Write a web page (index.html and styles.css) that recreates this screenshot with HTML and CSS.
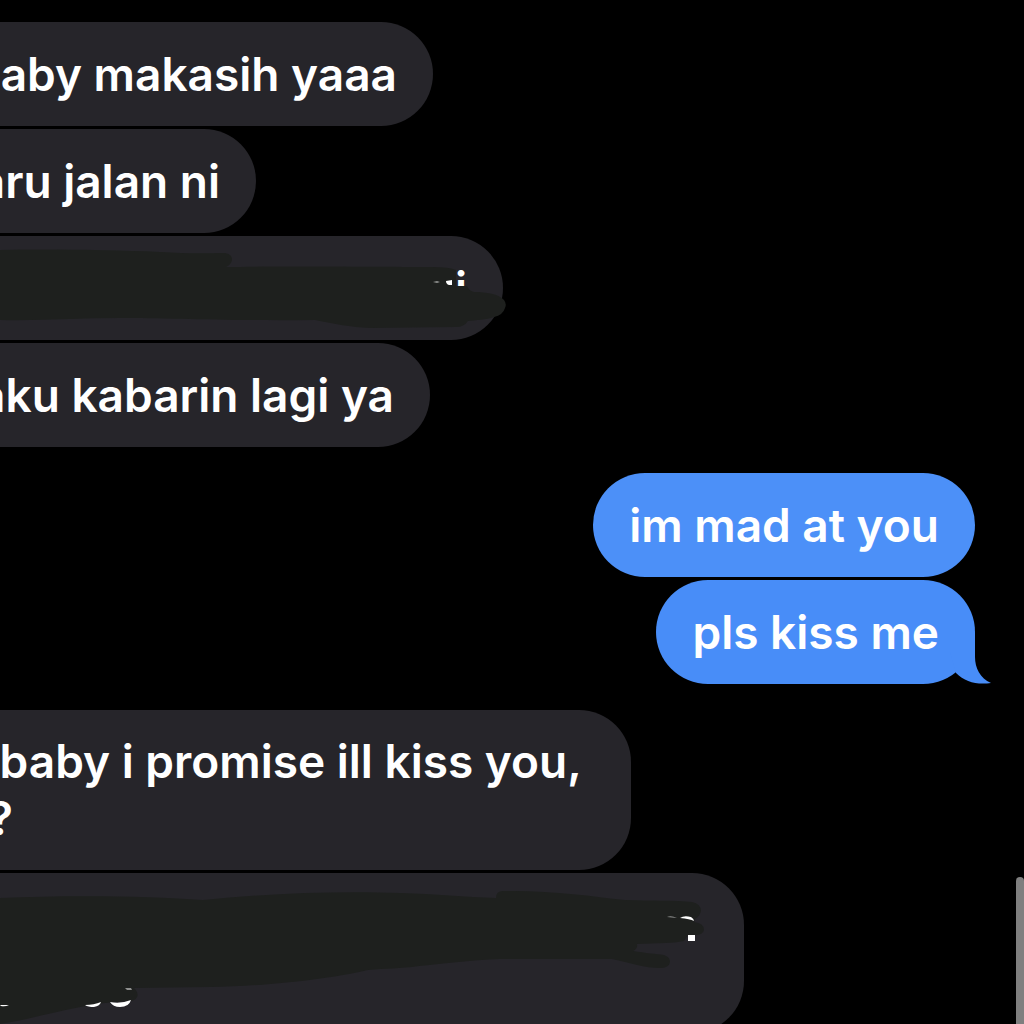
FILE: index.html
```
<!DOCTYPE html>
<html lang="id">
	<head>
		<meta charset="utf-8">
		<meta name="viewport" content="width=device-width, initial-scale=1">
		<title>Messages</title>
		<link rel="stylesheet" href="styles.css">
	</head>
	<body>
		<main class="chat">
			<section class="group received">
				<div class="bubble w-makasih"><p>baby makasih yaaa</p></div>
				<div class="bubble w-jalan"><p>aru jalan ni</p></div>
				<div class="bubble w-hidden">
					<p>i</p>
					<!-- marker over the message -->
					<svg class="marker" width="520" height="104" viewBox="0 236 520 104" aria-hidden="true">
						<path class="ink" d="M0 250C50 249 110 250 160 252C190 254 210 253 225 253Q232 254 232 260Q231 265 226 267C290 266 380 267 432 267Q450 267 456 270L456 286L467 286Q469 291 474 292C486 292 499 294 504 300Q507 304 505 308Q503 315 494 317C486 320 476 320 468 321Q464 327 456 327L370 328C350 327 335 324 315 320C230 321 170 318 120 318C80 318 40 321 0 320Z"/>
						<path class="bit" d="M446 281L452 280V285H449Q446 284 446 281Z"/>
						<path class="bit faint" d="M433 282L437 281L440 282L437 283Z"/>
					</svg>
				</div>
				<div class="bubble w-kabarin"><p>aku kabarin lagi ya</p></div>
			</section>

			<section class="group sent">
				<div class="bubble"><p>im mad at you</p></div>
				<div class="bubble last">
					<p>pls kiss me</p>
					<svg class="tail" width="61" height="52" viewBox="0 0 61 52" aria-hidden="true">
						<path d="M45 0V25C45 36 50 46 61 51C47 53 35 50 26 41L20 20Z"/>
					</svg>
				</div>
			</section>

			<section class="group received">
				<div class="bubble long w-promise"><p>&nbsp;baby i promise ill kiss you,<br>?</p></div>
				<div class="bubble long w-cut">
					<svg class="marker" width="744" height="160" viewBox="0 873 744 160" aria-hidden="true">
						<path class="ink" d="M0 898C70 895 150 896 203 900C270 893 340 891 400 893C435 894 465 897 496 898Q496 891 503 891C550 890 590 896 625 900C650 901 675 900 692 902Q701 904 701 911Q700 916 695 919L694 922Q704 923 704 930Q703 935 695 935H688L684 941Q675 943 665 943L637 944Q638 949 633 951C646 953 656 954 664 955Q670 957 670 962Q669 968 660 968C645 968 630 963 612 959L500 959C470 960 440 964 419 966C400 969 385 968 368 970C330 979 270 986 210 987L134 988Q139 993 137 997Q135 1001 130 1001C80 1003 40 1018 0 1024Z"/>
						<path class="bit" d="M680 918Q684 915 691 917Q694 919 694 921Q690 919 680 918Z"/>
						<path class="bit faint" d="M667 917Q671 915 677 918Z"/>
						<path class="bit" d="M688 935H695V941H688Z"/>
						<path class="bit" d="M85 1005Q94 1005 101 1002Q100 1006 94 1007Q88 1007 85 1005Z"/>
						<path class="bit" d="M110 1002Q121 1004 131 1000Q129 1007 120 1007Q113 1007 110 1002Z"/>
						<path class="bit" d="M0 1005L9 1005Q5 1007 1 1006Z"/>
						<path class="bit faint" d="M125 988H131L132 990H127Z"/>
					</svg>
				</div>
			</section>
		</main>
		<div class="scrollbar"></div>
	</body>
</html>
```

FILE: styles.css
```
* {
	box-sizing: border-box;
}
html {
	height: 100%;
	overflow: hidden;
	background: #000;
}
body {
	position: relative;
	height: 100%;
	margin: 0;
	overflow: hidden;
	background: #000;
	color: #fff;
	font-family: "Inter", "Liberation Sans", sans-serif;
	font-size: 46px;
	font-weight: 600;
	line-height: 57px;
}
p {
	margin: 0;
	white-space: nowrap;
}
.chat {
	display: flex;
	flex-direction: column;
	gap: 26px;
	padding-top: 22px;
}
.group {
	display: flex;
	flex-direction: column;
	gap: 3px;
}
.bubble {
	position: relative;
	display: flex;
	align-items: center;
	justify-content: flex-end;
	min-height: 104px;
	padding: 23px 36px;
	border-radius: 52px;
}

/* the left side runs off the screen */
.received {
	align-items: flex-start;
}
.received .bubble {
	padding-left: 0;
	border-radius: 0 52px 52px 0;
	background: #26252a;
}
.received .long {
	justify-content: flex-start;
	min-height: 160px;
}
.long p {
	margin-left: -12px;
}
.w-makasih {
	width: 433px;
}
.w-jalan {
	width: 256px;
}
.w-hidden {
	width: 503px;
}
.w-kabarin {
	width: 430px;
}
.w-promise {
	width: 631px;
}
.w-cut {
	width: 744px;
}

.sent {
	align-items: flex-end;
	padding-right: 49px;
}
.sent .bubble {
	background: #4c90f8;
}
.sent .last {
	background: #488df8;
}
.tail {
	position: absolute;
	right: -16px;
	bottom: 0;
	fill: #488df8;
}

.marker {
	position: absolute;
	top: 0;
	left: 0;
}
.ink {
	fill: #1e201e;
}
.bit {
	fill: #fff;
}
.faint {
	opacity: 0.5;
}
.scrollbar {
	position: absolute;
	right: 0;
	bottom: 0;
	width: 8px;
	height: 147px;
	border-radius: 4px 4px 0 0;
	background: #7f7f7f;
}
```
